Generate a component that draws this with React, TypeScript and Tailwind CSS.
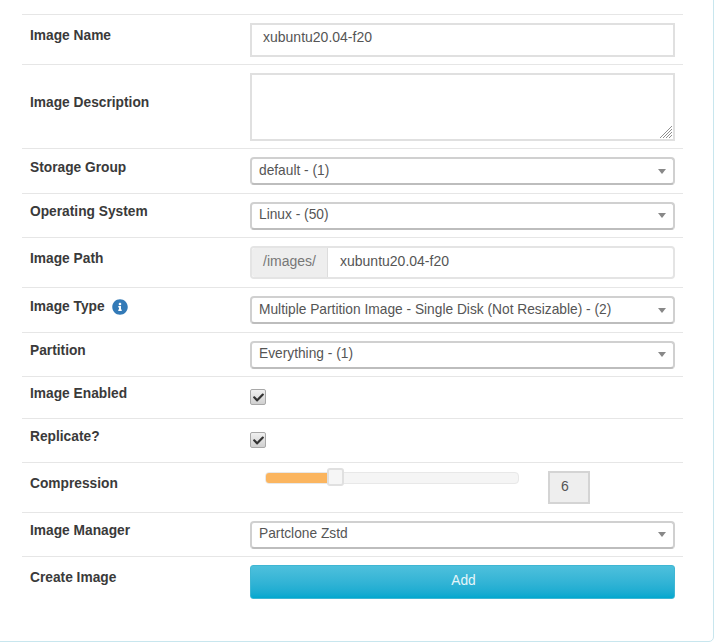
import { FaCheck, FaInfoCircle } from "react-icons/fa";
import type { ReactNode } from "react";

function Row({ label, height, children }: { label: ReactNode; height: string; children: ReactNode }) {
  return (
    <div className={`flex border-t border-[#e6e6e6] ${height}`}>
      <div className="w-[228px] pl-2 pb-[7px] flex items-center font-bold text-[13.76px] text-[#3a3a3a]">{label}</div>
      <div className="w-[425px] flex items-center">{children}</div>
    </div>
  );
}

function Select({ value }: { value: string }) {
  return (
    <div className="w-full h-[28px] flex items-center justify-between pl-[7px] pr-[7px] bg-white border-2 border-[#d0d0d0] border-b-[#bdbdbd] rounded-[4px] text-[#555] text-[13.76px]">
      <span className="pb-[1px]">{value}</span>
      <span className="w-0 h-0 border-x-4 border-x-transparent border-t-[5px] border-t-[#888]" />
    </div>
  );
}

function Check() {
  return (
    <div className="mb-[1px] w-[16px] h-[16px] flex items-center justify-center rounded-[2px] border border-[#a8a8a8] bg-gradient-to-b from-[#f0f0f0] to-[#d0d0d0]">
      <FaCheck className="w-[11px] h-[11px] text-[#333]" />
    </div>
  );
}

export default function App() {
  return (
    <div className="h-[644px] overflow-hidden bg-white font-['Liberation_Sans',Arial,sans-serif] text-[14px] leading-5">
      <div className="-ml-3 -mt-3 w-[726px] h-[654px] border border-[#c8e6ee] rounded-[5px] pt-[25px] pl-[33px]">
        <div className="w-[661px]">
          <Row label="Image Name" height="h-[50px]">
            <div className="w-full h-[34px] flex items-center pl-[11px] pb-[5px] border-2 border-[#e0e0e0] text-[#555]">xubuntu20.04-f20</div>
          </Row>
          <Row label="Image Description" height="h-[84px]">
            <div className="relative w-full h-[68px] border-2 border-[#e0e0e0]">
              <svg className="absolute right-0 bottom-0" width="14" height="14" viewBox="0 0 14 14" stroke="#8f8f8f" strokeWidth="1">
                <path d="M1 13 13 1M4 13 13 4M7 13 13 7M10 13 13 10" />
              </svg>
            </div>
          </Row>
          <Row label="Storage Group" height="h-[45px]">
            <Select value="default - (1)" />
          </Row>
          <Row label="Operating System" height="h-[44px]">
            <Select value="Linux - (50)" />
          </Row>
          <Row label="Image Path" height="h-[50px]">
            <div className="w-full h-[33px] flex border-2 border-[#e4e4e4] rounded-[4px] text-[#555]">
              <div className="w-[76px] pb-[3px] bg-[#eeeeee] flex items-center justify-center text-[#777] border-r border-[#dddddd] rounded-l-[3px]">/images/</div>
              <div className="flex-1 flex items-center pl-[12px] pb-[3px]">xubuntu20.04-f20</div>
            </div>
          </Row>
          <Row
            label={
              <span className="flex items-center gap-[7px]">
                Image Type <FaInfoCircle className="w-[16px] h-[16px] text-[#337ab7]" />
              </span>
            }
            height="h-[45px]"
          >
            <Select value="Multiple Partition Image - Single Disk (Not Resizable) - (2)" />
          </Row>
          <Row label="Partition" height="h-[44px]">
            <Select value="Everything - (1)" />
          </Row>
          <Row label="Image Enabled" height="h-[42px]">
            <Check />
          </Row>
          <Row label="Replicate?" height="h-[44px]">
            <Check />
          </Row>
          <Row label="Compression" height="h-[50px]">
            <div className="w-full h-full flex items-start pl-[15px] pt-[8px]">
              <div className="relative w-[254px] h-[12px] mt-[1px] bg-[#f5f5f5] border border-[#e8e8e8] rounded-[4px]">
                <div className="w-[64px] h-full bg-[#fbb55f] rounded-l-[3px]" />
                <div className="absolute left-[61px] top-[-5px] w-[17px] h-[18px] bg-[#f6f6f6] border-2 border-[#e0e0e0] rounded-[3px]" />
              </div>
              <div className="ml-[29px] w-[42px] h-[33px] flex items-center pl-[11px] pb-[4px] bg-[#eeeeee] border-2 border-[#d4d4d4] text-[#555]">6</div>
            </div>
          </Row>
          <Row label="Image Manager" height="h-[44px]">
            <Select value="Partclone Zstd" />
          </Row>
          <Row label="Create Image" height="h-[50px]">
            <button className="w-full h-[34px] pb-[2px] pl-[2px] rounded-[3px] bg-gradient-to-b from-[#4dc0dc] to-[#00a8cf] border border-[#3fb6d3] text-[#e6f6fa] text-[13.76px]">Add</button>
          </Row>
        </div>
      </div>
    </div>
  );
}
